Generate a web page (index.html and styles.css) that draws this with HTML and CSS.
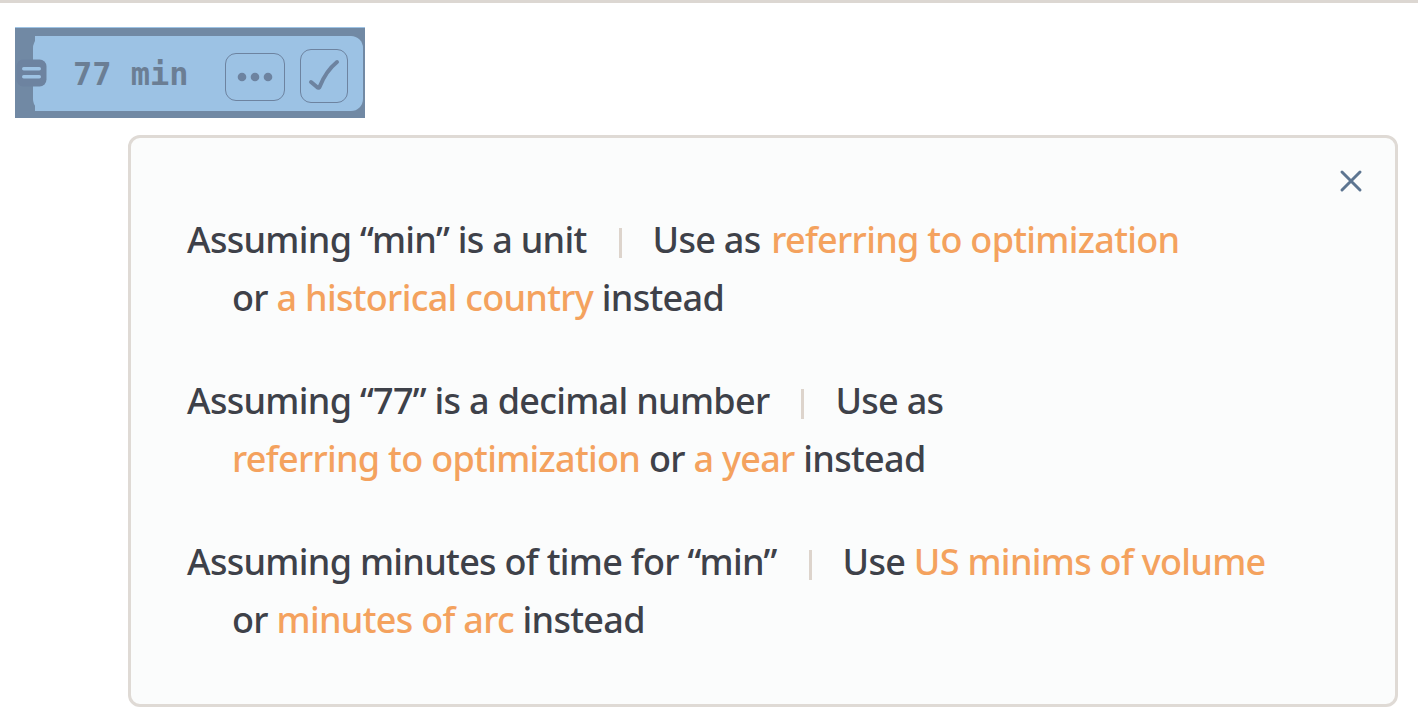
FILE: index.html
```html
<!DOCTYPE html>
<html>
<head>
<meta charset="utf-8">
<link rel="stylesheet" href="styles.css">
</head>
<body>
<div class="topline"></div>
<div class="inputbar">
  <div class="inner">
    <svg class="eq" width="31" height="28" viewBox="0 0 31 28">
      <rect x="0.5" y="0.5" width="30" height="27" rx="7" fill="#6d83a0"/>
      <rect x="6" y="8" width="19" height="3.5" rx="1.7" fill="#9ec3e4"/>
      <rect x="6" y="16" width="19" height="3.5" rx="1.7" fill="#9ec3e4"/>
    </svg>
    <span class="query">77 min</span>
    <div class="btn more">
      <svg width="40" height="12" viewBox="0 0 40 12">
        <circle cx="7" cy="6" r="4.3" fill="#6d83a0"/>
        <circle cx="20" cy="6" r="4.3" fill="#6d83a0"/>
        <circle cx="33" cy="6" r="4.3" fill="#6d83a0"/>
      </svg>
    </div>
    <div class="btn check">
      <svg width="32" height="36" viewBox="0 0 32 36">
        <path d="M3 24 L9 29 Q11 31 12 28 Q18 13 29 4" fill="none" stroke="#6d83a0" stroke-width="4" stroke-linecap="round" stroke-linejoin="round"/>
      </svg>
    </div>
  </div>
</div>

<div class="popup">
  <svg class="close" width="24" height="24" viewBox="0 0 24 24">
    <path d="M3 3 L21 21 M21 3 L3 21" stroke="#5d7591" stroke-width="3" stroke-linecap="round"/>
  </svg>
  <div class="group">
    <div class="line">Assuming “min” is a unit<span class="sep"></span>Use as <a class="opt gap">referring to optimization</a></div>
    <div class="line sub">or <a class="opt">a historical country</a> instead</div>
  </div>
  <div class="group">
    <div class="line">Assuming “77” is a decimal number<span class="sep"></span>Use as</div>
    <div class="line sub"><a class="opt">referring to optimization</a> or <a class="opt">a year</a> instead</div>
  </div>
  <div class="group">
    <div class="line">Assuming minutes of time for “min”<span class="sep"></span>Use <a class="opt">US minims of volume</a></div>
    <div class="line sub">or <a class="opt">minutes of arc</a> instead</div>
  </div>
</div>
</body>
</html>
```

FILE: styles.css
```css
html, body {
  margin: 0;
  padding: 0;
  background: #ffffff;
}
body {
  font-family: "Noto Sans", "Open Sans", sans-serif;
  color: #3e4149;
  width: 1418px;
  height: 726px;
  overflow: hidden;
}
.topline {
  height: 3px;
  background: #dcd7d2;
}
.inputbar {
  margin-left: 15px;
  margin-top: 24px;
  width: 350px;
  height: 91px;
  background: #7189a4;
  box-sizing: border-box;
  padding: 8px 2px 7px 0;
  border-top: 1px solid #9ec3e4;
}
.inner {
  height: 75px;
  background: #9cc2e4;
  border-radius: 0 12px 12px 0;
  display: flex;
  align-items: center;
  position: relative;
}
.inner::before {
  content: "";
  position: absolute;
  left: 0;
  top: 0;
  bottom: 0;
  width: 20px;
  background: #7189a4;
}
.inner::after {
  content: "";
  position: absolute;
  left: 18px;
  top: 0;
  bottom: 0;
  width: 14px;
  background: #9cc2e4;
  border-radius: 12px 0 0 12px;
}
.eq {
  position: relative;
  z-index: 1;
  margin-left: 1px;
  margin-top: -2px;
  flex: none;
}
.query {
  font-family: "DejaVu Sans Mono", "Liberation Mono", monospace;
  font-weight: bold;
  font-size: 32px;
  color: #6b7e94;
  margin-left: 26px;
}
.btn {
  box-sizing: border-box;
  border: 1.5px solid #6d83a0;
  border-radius: 11px;
  display: flex;
  align-items: center;
  justify-content: center;
  height: 48px;
  margin-top: 6px;
}
.more {
  width: 60px;
  margin-left: 36px;
}
.check {
  width: 48px;
  height: 54px;
  margin-top: 4px;
  margin-left: 15px;
}
.popup {
  position: relative;
  margin-left: 128px;
  margin-top: 17px;
  width: 1270px;
  height: 572px;
  box-sizing: border-box;
  border: 3px solid #dfdad5;
  border-radius: 12px;
  background: #fbfcfc;
  padding: 73px 0 0 56px;
  display: flex;
  flex-direction: column;
  gap: 45px;
}
.close {
  position: absolute;
  right: 32px;
  top: 31px;
}
.group {
  display: flex;
  flex-direction: column;
}
.line {
  font-size: 36px;
  font-weight: 500;
  line-height: 58px;
  height: 58px;
  white-space: nowrap;
  letter-spacing: -0.7px;
}
.sub {
  padding-left: 45px;
}
.opt {
  color: #f4a25e;
}
.gap {
  margin-left: 2px;
}
.sep {
  display: inline-block;
  width: 3px;
  height: 30px;
  background: #ddd4cc;
  margin: 0 31px 0 32px;
  vertical-align: -5px;
}
```
